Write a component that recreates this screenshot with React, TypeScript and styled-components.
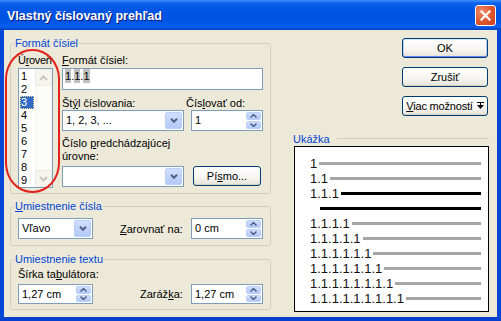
import React from 'react'
import styled, { createGlobalStyle } from 'styled-components'

const GlobalStyle = createGlobalStyle`
  html, body {
    margin: 0;
    padding: 0;
    background: #fff;
  }
  body {
    font-family: "Liberation Sans", Arial, sans-serif;
    font-size: 11px;
    color: #000;
  }
`

const levels = ['1', '2', '3', '4', '5', '6', '7', '8', '9']

const previewRows: { label: string, dark?: boolean }[] = [
  { label: '1' },
  { label: '1.1' },
  { label: '1.1.1', dark: true },
  { label: '', dark: true },
  { label: '1.1.1.1' },
  { label: '1.1.1.1.1' },
  { label: '1.1.1.1.1.1' },
  { label: '1.1.1.1.1.1.1' },
  { label: '1.1.1.1.1.1.1.1' },
  { label: '1.1.1.1.1.1.1.1.1' },
]

const DropArrow = () => (
  <svg width="8" height="5" viewBox="0 0 8 5">
    <path d="M1 0.8 L4 3.8 L7 0.8" fill="none" stroke="#4D6185" strokeWidth="2" />
  </svg>
)

const SpinArrow: React.FC<{ up?: boolean }> = ({ up }) => (
  <svg width="7" height="4" viewBox="0 0 7 4">
    <path d={up ? 'M0.5 3.5 L3.5 0.5 L6.5 3.5' : 'M0.5 0.5 L3.5 3.5 L6.5 0.5'} fill="none" stroke="#4D6185" strokeWidth="1.5" />
  </svg>
)

const ScrollArrow: React.FC<{ up?: boolean }> = ({ up }) => (
  <svg width="9" height="6" viewBox="0 0 9 6">
    <path d={up ? 'M1 5 L4.5 1.5 L8 5' : 'M1 1 L4.5 4.5 L8 1'} fill="none" stroke="#C9C7BA" strokeWidth="2" />
  </svg>
)

const Combo: React.FC<{ value?: string, width: number }> = ({ value, width }) => (
  <ComboBox style={{ width }}>
    <ComboValue>{value}</ComboValue>
    <DropButton><DropArrow /></DropButton>
  </ComboBox>
)

const Spinner: React.FC<{ value: string, width: number, height?: number }> = ({ value, width, height = 21 }) => (
  <SpinBox style={{ width, height }}>
    <ComboValue>{value}</ComboValue>
    <SpinButtons>
      <SpinHalf><SpinArrow up /></SpinHalf>
      <SpinHalf><SpinArrow /></SpinHalf>
    </SpinButtons>
  </SpinBox>
)

export default function App() {
  return (
    <>
      <GlobalStyle />
      <Window>
        <TitleBar>
          <Title>Vlastný číslovaný prehľad</Title>
          <CloseButton>
            <svg width="11" height="11" viewBox="0 0 11 11">
              <path d="M1.5 1.5 L9.5 9.5 M9.5 1.5 L1.5 9.5" stroke="#fff" strokeWidth="2.2" strokeLinecap="square" />
            </svg>
          </CloseButton>
        </TitleBar>
        <Body>
          <LeftColumn>
            <Group>
              <GroupTitle>Formát čísiel</GroupTitle>
              <FormatArea>
                <LevelColumn>
                  <Label $tight>Ú<u>r</u>oveň</Label>
                  <ListBox>
                    <ListItems>
                      {levels.map(l => (
                        <ListItem key={l} $selected={l === '3'}>{l}</ListItem>
                      ))}
                    </ListItems>
                    <ScrollBar>
                      <ScrollButton><ScrollArrow up /></ScrollButton>
                      <ScrollTrack />
                      <ScrollButton><ScrollArrow /></ScrollButton>
                    </ScrollBar>
                  </ListBox>
                  <Annotation />
                </LevelColumn>
                <FieldsColumn>
                  <Label><u>F</u>ormát čísiel:</Label>
                  <TextField>
                    <Field>1</Field>.<Field>1</Field>.<Field>1</Field>
                  </TextField>
                  <FieldRow $top={7}>
                    <FieldCell>
                      <Label>Št<u>ý</u>l číslovania:</Label>
                      <Combo value="1, 2, 3, ..." width={122} />
                    </FieldCell>
                    <FieldCell $shift={2}>
                      <Label>Čís<u>l</u>ovať od:</Label>
                      <SpinnerSlot>
                        <Spinner value="1" width={72} />
                      </SpinnerSlot>
                    </FieldCell>
                  </FieldRow>
                  <Label $top={6}>Číslo <u>p</u>redchádzajúcej<br />úrovne:</Label>
                  <FieldRow $top={3}>
                    <Combo width={122} />
                    <PushButton $width={68} $height={20} $left={9}>Pí<u>s</u>mo...</PushButton>
                  </FieldRow>
                </FieldsColumn>
              </FormatArea>
            </Group>

            <Group $top={6} $bottom={6}>
              <GroupTitle><u>U</u>miestnenie čísla</GroupTitle>
              <InlineRow $top={5}>
                <Combo value="Vľavo" width={75} />
                <InlineLabel $left={27}><u>Z</u>arovnať na:</InlineLabel>
                <Push />
                <Spinner value="0 cm" width={72} />
              </InlineRow>
            </Group>

            <Group $top={7} $bottom={5}>
              <GroupTitle>Umiestnenie textu</GroupTitle>
              <Label $top={2}>Šírka ta<u>b</u>ulátora:</Label>
              <InlineRow $top={3}>
                <Spinner value="1,27 cm" width={75} height={20} />
                <InlineLabel $left={47}>Zaráž<u>k</u>a:</InlineLabel>
                <Push />
                <Spinner value="1,27 cm" width={72} height={20} />
              </InlineRow>
            </Group>
          </LeftColumn>

          <RightColumn>
            <ButtonStack>
              <PushButton $width={86} $height={20} $default>OK</PushButton>
              <PushButton $width={86} $height={20}>Zrušiť</PushButton>
              <PushButton $width={86} $height={20}>
                <ButtonText><u>V</u>iac možností</ButtonText>
                <MoreIcon width="7" height="8" viewBox="0 0 7 8">
                  <rect x="0" y="0" width="7" height="1" fill="#000" />
                  <rect x="3" y="1" width="1" height="2" fill="#000" />
                  <polygon points="0,3 7,3 3.5,7" fill="#000" />
                </MoreIcon>
              </PushButton>
            </ButtonStack>
            <SectionHeader>
              <SectionTitle>Ukážka</SectionTitle>
              <SectionRule />
            </SectionHeader>
            <Preview>
              {previewRows.map((row, i) => (
                <PreviewRow key={i}>
                  {row.label && <PreviewNumber>{row.label}</PreviewNumber>}
                  <PreviewLine $dark={row.dark} $indent={row.label ? 2 : 10} />
                </PreviewRow>
              ))}
            </Preview>
          </RightColumn>
        </Body>
      </Window>
    </>
  )
}

const Window = styled.div`
  width: 501px;
  height: 321px;
  display: flex;
  flex-direction: column;
  background: #ECE9D8;
  overflow: hidden;
`

const TitleBar = styled.div`
  height: 30px;
  flex-shrink: 0;
  display: flex;
  align-items: center;
  justify-content: space-between;
  padding: 0 5px 0 7px;
  box-sizing: border-box;
  background: linear-gradient(180deg, #3D8EFB 0%, #0B5FEA 12%, #0055E5 35%, #0054E3 70%, #0A5EEF 88%, #0043C4 100%);
`

const Title = styled.div`
  color: #fff;
  font-family: "Liberation Sans", Arial, sans-serif;
  font-weight: bold;
  font-size: 12.5px;
  text-shadow: 1px 1px #0A1D7A;
  padding-top: 1px;
`

const CloseButton = styled.div`
  width: 21px;
  height: 21px;
  box-sizing: border-box;
  border: 1px solid #fff;
  border-radius: 3px;
  background: radial-gradient(circle at 30% 30%, #F08D6D 0%, #E0592F 50%, #C6401A 100%);
  display: flex;
  align-items: center;
  justify-content: center;
  margin-top: 1px;
`

const Body = styled.div`
  flex: 1;
  display: flex;
  border: 4px solid #0A4BDC;
  border-top: none;
  padding-left: 6px;
  border-left-color: #0747D6;
  border-right-color: #0746D4;
  border-bottom-color: #0740CE;
`

const LeftColumn = styled.div`
  width: 261px;
  display: flex;
  flex-direction: column;
  padding-top: 7px;
`

const RightColumn = styled.div`
  width: 195px;
  margin-left: 23px;
  padding-top: 8px;
  display: flex;
  flex-direction: column;
`

const Group = styled.fieldset<{ $top?: number, $bottom?: number }>`
  margin: ${({ $top }) => $top || 0}px 0 0 0;
  padding: 0 7px ${({ $bottom }) => $bottom ?? 5}px 7px;
  border: 1px solid #D0D0BF;
  border-radius: 3px;
  min-width: 0;
  box-sizing: border-box;
`

const GroupTitle = styled.legend`
  color: #0046D5;
  padding: 0 1px;
  margin-left: -4px;
  line-height: 13px;
  height: 13px;
`

const Label = styled.div<{ $top?: number, $tight?: boolean }>`
  line-height: 13px;
  margin-top: ${({ $top }) => $top || 0}px;
  white-space: nowrap;
  letter-spacing: ${({ $tight }) => ($tight ? '-0.3px' : 'normal')};
`

const InlineLabel = styled.div<{ $left: number }>`
  margin-left: ${({ $left }) => $left}px;
  white-space: nowrap;
`

const FormatArea = styled.div`
  display: flex;
  gap: 9px;
  padding-top: 4px;
`

const LevelColumn = styled.div`
  position: relative;
  width: 35px;
  display: flex;
  flex-direction: column;
`

const Annotation = styled.div`
  position: absolute;
  left: -13px;
  top: -5px;
  width: 55px;
  height: 144px;
  box-sizing: border-box;
  border: 2px solid #E3231B;
  border-radius: 27px / 30px;
  pointer-events: none;
`

const ListBox = styled.div`
  margin-top: 1px;
  height: 120px;
  box-sizing: border-box;
  border: 1px solid #7F9DB9;
  background: #fff;
  display: flex;
`

const ListItems = styled.div`
  width: 16px;
  padding-top: 1px;
`

const ListItem = styled.div<{ $selected?: boolean }>`
  height: 13px;
  line-height: 13px;
  margin: 0 1px;
  padding-left: 1px;
  color: ${({ $selected }) => ($selected ? '#fff' : '#000')};
  background: ${({ $selected }) => ($selected ? '#316AC5' : 'transparent')};
  outline: ${({ $selected }) => ($selected ? '1px dotted #E9D88A' : 'none')};
  outline-offset: -1px;
`

const ScrollBar = styled.div`
  width: 17px;
  display: flex;
  flex-direction: column;
  background: #FCFCF9;
`

const ScrollButton = styled.div`
  height: 17px;
  box-sizing: border-box;
  border: 1px solid #EDEBE2;
  border-radius: 2px;
  background: #F6F5F0;
  display: flex;
  align-items: center;
  justify-content: center;
`

const ScrollTrack = styled.div`
  flex: 1;
  border-left: 1px solid #F3F2EC;
  border-right: 1px solid #F3F2EC;
`

const FieldsColumn = styled.div`
  width: 201px;
  display: flex;
  flex-direction: column;
`

const TextField = styled.div`
  margin-top: 1px;
  height: 22px;
  box-sizing: border-box;
  border: 1px solid #7F9DB9;
  background: #fff;
  padding: 0 0 0 2px;
  display: flex;
  align-items: flex-start;
  line-height: 14px;
  font-size: 11px;
`

const Field = styled.span`
  background: #C0C0C0;
  height: 14px;
`

const FieldRow = styled.div<{ $top?: number }>`
  display: flex;
  align-items: flex-start;
  margin-top: ${({ $top }) => $top || 0}px;
`

const FieldCell = styled.div<{ $shift?: number }>`
  display: flex;
  flex-direction: column;
  margin-left: ${({ $shift }) => $shift || 0}px;
`

const SpinnerSlot = styled.div`
  padding-left: 5px;
`

const InlineRow = styled.div<{ $top?: number }>`
  display: flex;
  align-items: center;
  margin-top: ${({ $top }) => $top || 0}px;
`

const Push = styled.div`
  flex: 1;
`

const ComboBox = styled.div`
  height: 21px;
  box-sizing: border-box;
  border: 1px solid #7F9DB9;
  background: #fff;
  padding: 1px;
  display: flex;
`

const ComboValue = styled.div`
  flex: 1;
  padding-left: 2px;
  line-height: 17px;
  white-space: nowrap;
  overflow: hidden;
`

const DropButton = styled.div`
  width: 17px;
  box-sizing: border-box;
  border: 1px solid #B9CEF8;
  border-radius: 2px;
  background: linear-gradient(180deg, #D2DEFD 0%, #C1D3FB 50%, #B4C9F8 100%);
  display: flex;
  align-items: center;
  justify-content: center;
`

const SpinBox = styled.div`
  box-sizing: border-box;
  border: 1px solid #7F9DB9;
  background: #fff;
  padding: 1px;
  display: flex;
`

const SpinButtons = styled.div`
  width: 15px;
  display: flex;
  flex-direction: column;
  gap: 1px;
`

const SpinHalf = styled.div`
  flex: 1;
  box-sizing: border-box;
  border: 1px solid #B9CEF8;
  border-radius: 2px;
  background: linear-gradient(180deg, #D2DEFD 0%, #C1D3FB 50%, #B4C9F8 100%);
  display: flex;
  align-items: center;
  justify-content: center;
`

const PushButton = styled.div<{ $width: number, $height: number, $left?: number, $default?: boolean }>`
  width: ${({ $width }) => $width}px;
  height: ${({ $height }) => $height}px;
  margin-left: ${({ $left }) => $left || 0}px;
  box-sizing: border-box;
  border: 1px solid #003C74;
  border-radius: 3px;
  background: linear-gradient(180deg, #FFFFFF 0%, #F6F5F1 60%, #E5E2D8 100%);
  box-shadow: ${({ $default }) => ($default ? 'inset 0 1px 0 #CEE7FF, inset 0 -1px 0 #6982EE, inset 1px 0 0 #B7CDF5, inset -1px 0 0 #B7CDF5' : 'inset 0 -1px 0 #D8D2BD')};
  display: flex;
  align-items: center;
  justify-content: center;
  white-space: nowrap;
  overflow: hidden;
`

const ButtonText = styled.span`
  letter-spacing: -0.2px;
`

const MoreIcon = styled.svg`
  margin-left: 4px;
  flex-shrink: 0;
`

const ButtonStack = styled.div`
  display: flex;
  flex-direction: column;
  gap: 9px;
  padding-left: 108px;
`

const SectionHeader = styled.div`
  display: flex;
  align-items: center;
  margin-top: 17px;
  margin-left: -1px;
  height: 13px;
`

const SectionTitle = styled.div`
  color: #0046D5;
  line-height: 13px;
`

const SectionRule = styled.div`
  flex: 1;
  height: 0;
  border-top: 1px solid #D0D0BF;
  margin-left: 7px;
  margin-top: -2px;
`

const Preview = styled.div`
  height: 166px;
  box-sizing: border-box;
  border: 1px solid #000;
  background: #fff;
  padding: 9px 7px 0 15px;
  display: flex;
  flex-direction: column;
`

const PreviewRow = styled.div`
  height: 15px;
  display: flex;
  align-items: center;
`

const PreviewNumber = styled.div`
  font-size: 13px;
  line-height: 15px;
  color: #111;
  white-space: nowrap;
`

const PreviewLine = styled.div<{ $dark?: boolean, $indent: number }>`
  flex: 1;
  height: 3px;
  margin-left: ${({ $indent }) => $indent}px;
  background: ${({ $dark }) => ($dark ? '#000' : '#A6A6A6')};
`
